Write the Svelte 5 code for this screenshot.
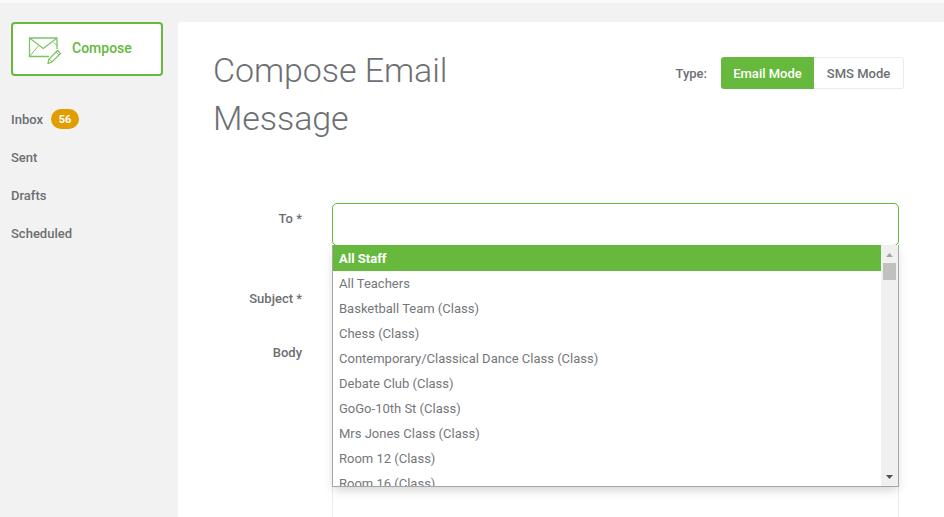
<script>
  let folders = [
    { name: 'Inbox', count: 56 },
    { name: 'Sent' },
    { name: 'Drafts' },
    { name: 'Scheduled' }
  ];

  let groups = [
    'All Staff',
    'All Teachers',
    'Basketball Team (Class)',
    'Chess (Class)',
    'Contemporary/Classical Dance Class (Class)',
    'Debate Club (Class)',
    'GoGo-10th St (Class)',
    'Mrs Jones Class (Class)',
    'Room 12 (Class)',
    'Room 16 (Class)'
  ];
</script>

<div class="page">
  <aside class="sidebar">
    <button class="compose">
      <svg width="34" height="28" viewBox="0 0 34 28" fill="none" stroke="#7cc464" stroke-width="1.3">
        <path d="M21 20.5H1.5V2H29V13" />
        <path d="M1.5 2L15.2 12.5L29 2" />
        <path d="M1.5 20.5L10.5 9.8M29 9.5L25.5 6.5" stroke-width="1" />
        <path d="M20 27.5L21 23L29.5 14.5L32.5 17.5L24 26Z" />
        <path d="M21 23L24 26M28 16L31 19" stroke-width="1" />
      </svg>
      <span>Compose</span>
    </button>
    <nav class="folders">
      {#each folders as folder}
        <div class="folder">
          {folder.name}
          {#if folder.count}<span class="badge">{folder.count}</span>{/if}
        </div>
      {/each}
    </nav>
  </aside>

  <main class="content">
    <header class="head">
      <h1>Compose Email Message</h1>
      <div class="mode">
        <span class="type">Type:</span>
        <div class="toggle">
          <button class="active">Email Mode</button>
          <button>SMS Mode</button>
        </div>
      </div>
    </header>

    <form class="form">
      <div class="row to">
        <label for="to">To *</label>
        <div class="field">
          <input id="to" type="text" />
          <div class="dropdown">
            <ul>
              {#each groups as group, i}
                <li class:selected={i === 0}>{group}</li>
              {/each}
            </ul>
            <div class="scrollbar">
              <svg class="arrow" width="7" height="4" viewBox="0 0 7 4"><path d="M3.5 0L7 4H0Z" fill="#a3a3a3" /></svg>
              <div class="thumb"></div>
              <svg class="arrow down" width="7" height="4" viewBox="0 0 7 4"><path d="M0 0H7L3.5 4Z" fill="#505050" /></svg>
            </div>
          </div>
        </div>
      </div>
      <div class="row subject">
        <label for="subject">Subject *</label>
        <div class="field"><input id="subject" type="text" /></div>
      </div>
      <div class="row body">
        <label for="body">Body</label>
        <div class="field"><textarea id="body"></textarea></div>
      </div>
    </form>
  </main>
</div>

<style>
  :global(body) {
    margin: 0;
    background: #f2f2f2;
  }

  .page {
    display: flex;
    height: 514px;
    border-top: 3px solid #fafafa;
    background: #f2f2f2;
    font-family: Roboto, "Liberation Sans", sans-serif;
    color: #6c6f73;
    overflow: hidden;
  }

  .sidebar {
    width: 178px;
    flex-shrink: 0;
    padding: 19px 15px 0 11px;
    box-sizing: border-box;
  }

  .compose {
    display: flex;
    align-items: center;
    width: 152px;
    height: 54px;
    padding: 0 0 0 15px;
    gap: 10px;
    background: #fff;
    border: 2px solid #66b93c;
    border-radius: 4px;
    color: #66b93c;
    font: 500 14px Roboto, sans-serif;
  }

  .compose span {
    margin-top: -2px;
  }

  .compose svg {
    margin-top: 1px;
  }

  .folders {
    margin-top: 24px;
  }

  .folder {
    display: flex;
    align-items: center;
    height: 38px;
    gap: 8px;
    font-size: 13px;
    font-weight: 500;
  }

  .badge {
    display: inline-block;
    width: 28px;
    height: 20px;
    line-height: 21px;
    text-align: center;
    border-radius: 10px;
    background: #e29d00;
    color: #fff;
    font-size: 11px;
    font-weight: 700;
  }

  .content {
    flex: 1;
    margin-top: 19px;
    background: #fff;
    padding: 0 40px 0 35px;
    border-radius: 4px 0 0 0;
  }

  .head {
    display: flex;
    justify-content: space-between;
    align-items: flex-start;
  }

  h1 {
    width: 300px;
    margin: 24px 0 0;
    font-size: 34px;
    font-weight: 300;
    line-height: 48px;
    letter-spacing: -0.08px;
    color: #6c6f73;
  }

  .mode {
    display: flex;
    align-items: center;
    gap: 14px;
    margin-top: 35px;
    font-size: 13px;
    font-weight: 500;
  }

  .toggle {
    display: flex;
  }

  .toggle button {
    height: 32px;
    width: 90px;
    padding: 0;
    border: 1px solid #e9ecef;
    border-left: 0;
    border-radius: 0 3px 3px 0;
    background: #fff;
    color: #6c6f73;
    font: 500 13px Roboto, sans-serif;
  }

  .toggle button.active {
    width: 93px;
    border: 0;
    border-radius: 3px 0 0 3px;
    background: #66b93c;
    color: #fff;
  }

  .form {
    margin-top: 61px;
    margin-right: -40px;
  }

  .row {
    display: grid;
    grid-template-columns: 89px 567px;
    column-gap: 30px;
  }

  label {
    text-align: right;
    font-size: 13px;
    font-weight: 500;
    line-height: 15px;
  }

  .to {
    height: 43px;
  }

  .to label {
    padding-top: 8px;
  }

  .subject {
    margin-top: 37px;
    height: 37px;
  }

  .subject label {
    padding-top: 8px;
  }

  .body {
    margin-top: 25px;
  }

  .field {
    position: relative;
  }

  input, textarea {
    display: block;
    width: 100%;
    box-sizing: border-box;
    border: 1px solid #e9ecef;
    border-radius: 5px;
    background: #fff;
    outline: none;
  }

  input {
    height: 100%;
  }

  textarea {
    height: 300px;
    resize: none;
  }

  #to {
    height: 43px;
    border-color: #66b93c;
  }

  .dropdown {
    position: absolute;
    top: 42px;
    left: 0;
    width: 567px;
    height: 242px;
    box-sizing: border-box;
    display: flex;
    background: #fff;
    border: 1px solid #a6a6a6;
    border-top: 0;
    box-shadow: 0 5px 10px -2px rgba(0, 0, 0, 0.18);
    overflow: hidden;
    z-index: 2;
  }

  ul {
    flex: 1;
    margin: 0;
    padding: 0;
    list-style: none;
    font-size: 13px;
    overflow: hidden;
  }

  li {
    height: 25px;
    line-height: 25px;
    padding-left: 6px;
    color: #74777a;
  }

  li.selected {
    height: 26px;
    line-height: 27px;
    background: #66b93c;
    color: #fff;
    font-weight: 700;
  }

  .scrollbar {
    position: relative;
    width: 17px;
    background: #f0f0f0;
    flex-shrink: 0;
  }

  .arrow {
    position: absolute;
    left: 5px;
    top: 8px;
  }

  .arrow.down {
    top: auto;
    bottom: 7px;
  }

  .thumb {
    position: absolute;
    top: 18px;
    left: 2px;
    width: 13px;
    height: 17px;
    background: #c0c0c0;
  }
</style>
